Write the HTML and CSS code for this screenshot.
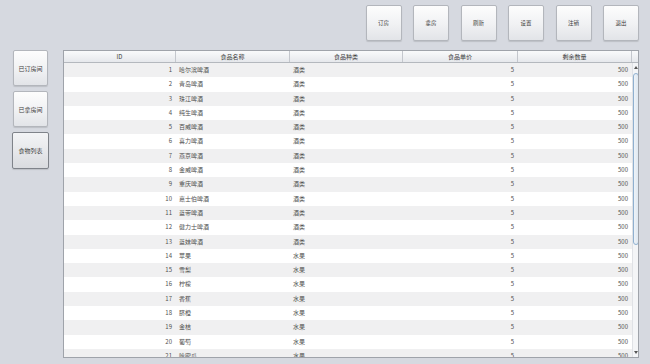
FILE: index.html
```html
<!DOCTYPE html>
<html lang="zh">
<head>
    <meta charset="UTF-8">
    <meta name="viewport" content="width=device-width, initial-scale=1.0">
    <title>食物列表</title>
    <link rel="stylesheet" href="styles.css">
</head>
<body>
    <div class="window">
        <div class="toolbar">
            <button class="btn top_btn">订房</button>
            <button class="btn top_btn">拿房</button>
            <button class="btn top_btn">刷新</button>
            <button class="btn top_btn">设置</button>
            <button class="btn top_btn">注销</button>
            <button class="btn top_btn">退出</button>
        </div>
        <div class="main">
            <div class="side">
                <button class="btn side_btn">已订房间</button>
                <button class="btn side_btn">已拿房间</button>
                <button class="btn side_btn active">食物列表</button>
            </div>
            <div class="table">
                <div class="thead">
                    <div class="th">ID</div>
                    <div class="th">食品名称</div>
                    <div class="th">食品种类</div>
                    <div class="th">食品单价</div>
                    <div class="th">剩余数量</div>
                    <div class="th corner"></div>
                </div>
                <div class="tbody">
                    <div class="rows" id="rows"></div>
                    <div class="scrollbar">
                        <div class="arrow up"></div>
                        <div class="thumb"></div>
                        <div class="arrow down"></div>
                    </div>
                </div>
            </div>
        </div>
    </div>
    <script>
      let foods = [
        ['哈尔滨啤酒','酒类'],['青岛啤酒','酒类'],['珠江啤酒','酒类'],['纯生啤酒','酒类'],
        ['百威啤酒','酒类'],['喜力啤酒','酒类'],['燕京啤酒','酒类'],['金威啤酒','酒类'],
        ['重庆啤酒','酒类'],['嘉士伯啤酒','酒类'],['蓝带啤酒','酒类'],['健力士啤酒','酒类'],
        ['蓝妹啤酒','酒类'],['苹果','水果'],['雪梨','水果'],['柠檬','水果'],
        ['香蕉','水果'],['脐橙','水果'],['金桔','水果'],['葡萄','水果'],['哈密瓜','水果']
      ]
      let rows = document.getElementById('rows')
      foods.forEach(function(food,index){
        let row = document.createElement('div')
        row.className = 'tr'
        row.innerHTML = `<div class="td num">${index+1}</div>`
          + `<div class="td">${food[0]}</div>`
          + `<div class="td">${food[1]}</div>`
          + `<div class="td num">5</div>`
          + `<div class="td num">500</div>`
        rows.appendChild(row)
      })
    </script>
</body>
</html>
```

FILE: styles.css
```css
body{
  margin: 0;
  background-color: #d6d9e0;
  font-family: "Noto Sans CJK SC", "DejaVu Sans", sans-serif;
  color: #505050;
}
.window{
  width: 650px;
  height: 364px;
  overflow: hidden;
}
.toolbar{
  display: flex;
  justify-content: flex-end;
  gap: 11.5px;
  padding: 5px 11px 0 0;
  height: 36px;
}
.btn{
  margin: 0;
  padding: 0;
  font-family: inherit;
  color: #404040;
  background: linear-gradient(#fdfdfd, #f0f1f3 55%, #e2e4e8);
  border: 1px solid #b3b6bc;
  border-radius: 2px;
  box-shadow: 0 1px 1px rgba(0,0,0,0.12);
}
.top_btn{
  width: 36px;
  height: 36px;
  font-size: 5.5px;
}
.main{
  display: flex;
  gap: 15px;
  margin-top: 9px;
}
.side{
  display: flex;
  flex-direction: column;
  gap: 5px;
  padding-left: 13px;
  width: 35px;
}
.side_btn{
  width: 35px;
  height: 36px;
  font-size: 6px;
}
.side_btn.active{
  width: 37px;
  margin-left: -1px;
  height: 37px;
  border-color: #7f838a;
  background: linear-gradient(#f3f4f6, #e6e7ea 55%, #d9dbdf);
}
.table{
  width: 574px;
  height: 306px;
  border: 1px solid #9fa3aa;
  background-color: #fff;
  display: flex;
  flex-direction: column;
  overflow: hidden;
}
.thead{
  display: grid;
  grid-template-columns: 112px 114px 113px 115px 114px 1fr;
  height: 11px;
  border-bottom: 1px solid #b4b8be;
  background: linear-gradient(#f9fafb, #e6e8ec);
}
.th{
  font-size: 6px;
  line-height: 11px;
  text-align: center;
  color: #3c3c3c;
  border-right: 1px solid #c4c7cd;
}
.th.corner{
  border-right: none;
}
.tbody{
  flex: 1;
  display: flex;
  overflow: hidden;
}
.rows{
  width: 568px;
}
.tr{
  display: grid;
  grid-template-columns: 112px 114px 113px 115px 114px;
  height: 14.3px;
}
.tr:nth-child(odd){
  background-color: #f0f0f1;
}
.td{
  font-size: 6px;
  line-height: 14.3px;
  padding: 0 3px;
  white-space: nowrap;
}
.td.num{
  text-align: right;
  padding-right: 4px;
}
.scrollbar{
  flex: 1;
  position: relative;
  background-color: #f4f5f7;
  border-left: 1px solid #e0e2e6;
}
.arrow{
  position: absolute;
  left: 1px;
  width: 0;
  height: 0;
  border-left: 2px solid transparent;
  border-right: 2px solid transparent;
}
.arrow.up{
  top: 3px;
  border-bottom: 3px solid #555;
}
.arrow.down{
  bottom: 3px;
  border-top: 3px solid #555;
}
.thumb{
  position: absolute;
  top: 10px;
  left: 0;
  width: 4px;
  height: 170px;
  border: 1px solid #8fb0d0;
  border-radius: 3px;
  background: linear-gradient(90deg, #eef3f8, #dfe8f1);
}
```
